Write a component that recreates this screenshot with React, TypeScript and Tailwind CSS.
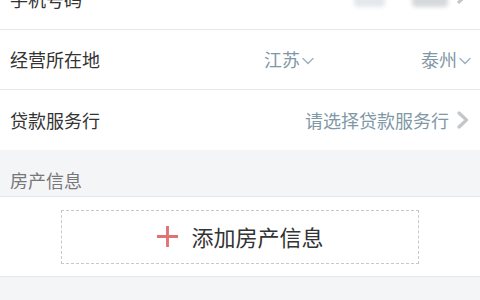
const font = { fontFamily: '"Noto Sans CJK SC", "Noto Sans", sans-serif' };

function RightArrow({ className }: { className?: string }) {
    return (
        <svg className={className} width="14" height="18" viewBox="0 0 14 18" fill="none">
            <path d="M3 2 L10.5 9 L3 16" stroke="#c4c7ca" strokeWidth="3.2" strokeLinecap="round" strokeLinejoin="round" />
        </svg>
    );
}

function DownArrow() {
    return (
        <svg className="ml-[2px] mt-[2px]" width="12" height="8" viewBox="0 0 12 8" fill="none">
            <path d="M1 1.5 L6 6.5 L11 1.5" stroke="#9fb0ba" strokeWidth="1.4" strokeLinecap="round" strokeLinejoin="round" />
        </svg>
    );
}

export default function App() {
    return (
        <div className="w-[480px] h-[300px] overflow-hidden bg-[#f4f5f7] text-[#333]" style={font}>
            {/* Phone number row, cut off at the top */}
            <div className="-mt-[30px] h-[60px] bg-white border-b border-[#e6e7e9] flex items-center px-[10px]">
                <span className="text-[18px] flex-1">手机号码</span>
                <div className="w-[31px] h-[20px] bg-[#e3e8ec] blur-[2px] rounded-sm mt-[-6px]" />
                <div className="ml-[27px] w-[36px] h-[20px] bg-[#d5d9dc] blur-[2px] rounded-sm mt-[-6px]" />
                <RightArrow className="ml-[8px] mt-[-10px]" />
            </div>

            {/* Location row */}
            <div className="h-[60px] bg-white border-b border-[#e6e7e9] flex items-center pl-[10px] pr-[9px]">
                <span className="text-[18px] w-[254px]">经营所在地</span>
                <span className="text-[18px] text-[#7f98a6] flex items-center">
                    江苏<DownArrow />
                </span>
                <span className="flex-1" />
                <span className="text-[18px] text-[#7f98a6] flex items-center">
                    泰州<DownArrow />
                </span>
            </div>

            {/* Bank row */}
            <div className="h-[60px] bg-white flex items-center px-[10px]">
                <span className="text-[18px] flex-1">贷款服务行</span>
                <span className="text-[18px] text-[#7f98a6]">请选择贷款服务行</span>
                <RightArrow className="ml-[7px]" />
            </div>

            {/* Section header */}
            <div className="h-[47px] flex items-end pb-[2px] px-[10px] border-b border-[#e6e7e9]">
                <span className="text-[18px] text-[#777]">房产信息</span>
            </div>

            {/* Add property */}
            <div className="h-[80px] bg-white border-b border-[#e6e7e9] flex items-center justify-center">
                <div className="w-[358px] h-[54px] border-[1.5px] border-dashed border-[#c8c8c8] flex items-center justify-center gap-[12px]">
                    <svg width="23" height="23" viewBox="0 0 24 24">
                        <path d="M12 1 V23 M1 12 H23" stroke="#e07272" strokeWidth="3" />
                    </svg>
                    <span className="text-[22px] text-[#333]">添加房产信息</span>
                </div>
            </div>
        </div>
    );
}
